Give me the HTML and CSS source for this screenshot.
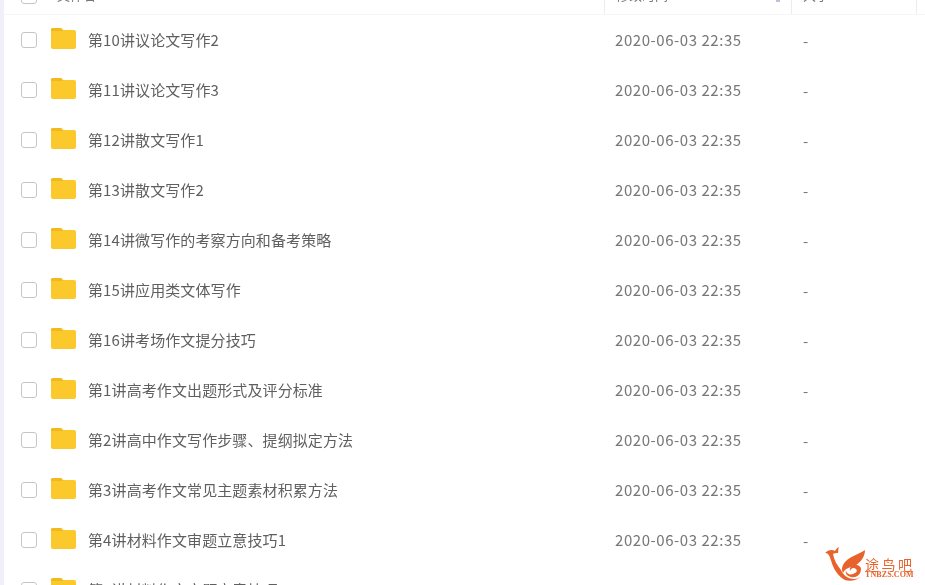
FILE: index.html
```html
<!DOCTYPE html>
<html lang="zh-CN">
<head>
<meta charset="utf-8">
<title>文件列表</title>
<link rel="stylesheet" href="styles.css">
</head>
<body>
<div class="page">
  <div class="table">
    <div class="head">
      <div class="cell-check"><span class="box"></span></div>
      <div class="head-name">文件名</div>
      <div class="head-time">修改时间<span class="sort"></span></div>
      <div class="head-size">大小</div>
      <div class="head-end"></div>
    </div>
    <div class="row"><span class="box"></span><svg class="folder" viewBox="0 0 25 21"><use href="#f"/></svg><span class="name">第10讲议论文写作2</span><span class="time">2020-06-03 22:35</span><span class="size">-</span></div>
    <div class="row"><span class="box"></span><svg class="folder" viewBox="0 0 25 21"><use href="#f"/></svg><span class="name">第11讲议论文写作3</span><span class="time">2020-06-03 22:35</span><span class="size">-</span></div>
    <div class="row"><span class="box"></span><svg class="folder" viewBox="0 0 25 21"><use href="#f"/></svg><span class="name">第12讲散文写作1</span><span class="time">2020-06-03 22:35</span><span class="size">-</span></div>
    <div class="row"><span class="box"></span><svg class="folder" viewBox="0 0 25 21"><use href="#f"/></svg><span class="name">第13讲散文写作2</span><span class="time">2020-06-03 22:35</span><span class="size">-</span></div>
    <div class="row"><span class="box"></span><svg class="folder" viewBox="0 0 25 21"><use href="#f"/></svg><span class="name">第14讲微写作的考察方向和备考策略</span><span class="time">2020-06-03 22:35</span><span class="size">-</span></div>
    <div class="row"><span class="box"></span><svg class="folder" viewBox="0 0 25 21"><use href="#f"/></svg><span class="name">第15讲应用类文体写作</span><span class="time">2020-06-03 22:35</span><span class="size">-</span></div>
    <div class="row"><span class="box"></span><svg class="folder" viewBox="0 0 25 21"><use href="#f"/></svg><span class="name">第16讲考场作文提分技巧</span><span class="time">2020-06-03 22:35</span><span class="size">-</span></div>
    <div class="row"><span class="box"></span><svg class="folder" viewBox="0 0 25 21"><use href="#f"/></svg><span class="name">第1讲高考作文出题形式及评分标准</span><span class="time">2020-06-03 22:35</span><span class="size">-</span></div>
    <div class="row"><span class="box"></span><svg class="folder" viewBox="0 0 25 21"><use href="#f"/></svg><span class="name">第2讲高中作文写作步骤、提纲拟定方法</span><span class="time">2020-06-03 22:35</span><span class="size">-</span></div>
    <div class="row"><span class="box"></span><svg class="folder" viewBox="0 0 25 21"><use href="#f"/></svg><span class="name">第3讲高考作文常见主题素材积累方法</span><span class="time">2020-06-03 22:35</span><span class="size">-</span></div>
    <div class="row"><span class="box"></span><svg class="folder" viewBox="0 0 25 21"><use href="#f"/></svg><span class="name">第4讲材料作文审题立意技巧1</span><span class="time">2020-06-03 22:35</span><span class="size">-</span></div>
    <div class="row"><span class="box"></span><svg class="folder" viewBox="0 0 25 21"><use href="#f"/></svg><span class="name">第5讲材料作文审题立意技巧2</span><span class="time">2020-06-03 22:35</span><span class="size">-</span></div>
  </div>
  <div class="mark">
    <svg class="bird" viewBox="0 0 44 36">
      <path fill="#e8622c" d="M2 7 C5 4 9 3 12 5 C13 3 14 2 16 1 C15 3 15.5 5 15 7 C13 7 11 7 10 8 C11 14 14 19 18 24 C20 29 25 33 31 33 C34 33 37 32 39 30 C35 34 27 36 22 34 C16 31 12 25 10 20 C8 15 7 10 5 8 C4 7 3 7 2 7 Z"/>
      <path fill="#e8622c" d="M42 4 C42 12 36 19 28 21 C24 22 21 24 20 27 C18 23 19 19 23 15 C28 10 36 8 42 4 Z"/>
      <path fill="#e8622c" d="M38 23 C38 29 33 32 28 31 C24 30 22 27 23 25 C24 28 27 29 30 28 C33 27 35 25 33 23 C31 21 28 22 27 25 C26 21 30 18 34 19 C36 19.5 38 21 38 23 Z"/>
    </svg>
    <div class="mark-text">
      <div class="mark-cn">途鸟吧</div>
      <div class="mark-en">TNBZS.COM</div>
    </div>
  </div>
</div>
<svg class="defs" width="0" height="0">
  <defs>
    <g id="f">
      <path fill="#fbc92b" d="M2 2 H23 C24.2 2 25 2.8 25 4 V19 C25 20.2 24.2 21 23 21 H2 C.8 21 0 20.2 0 19 V2 C0 .8 .8 0 2 0 H9 C10 0 10.5 .4 11 1 L12 2 Z"/>
      <path fill="#f2b91c" d="M0 3 V2 C0 .8 .8 0 2 0 H9 C10 0 10.5 .4 11 1 L12.5 3 Z"/>
    </g>
  </defs>
</svg>
</body>
</html>
```
FILE: styles.css
```css
html, body {
  margin: 0;
  height: 100%;
  overflow: hidden;
  background: #fff;
}
.page {
  position: relative;
  height: 585px;
  overflow: hidden;
  border-left: 4px solid #f0f0f8;
  font-family: "Noto Sans CJK SC", "Noto Sans", sans-serif;
  color: #666;
  filter: blur(0.45px);
}
.defs { position: absolute; }
.head {
  display: flex;
  align-items: flex-end;
  height: 15px;
  box-sizing: border-box;
  overflow: hidden;
  border-bottom: 1px solid #f6f6f8;
  font-size: 13px;
  line-height: 18px;
  color: #777;
}
.cell-check { width: 47px; padding-left: 17px; flex: none; box-sizing: border-box; margin-bottom: 10px; }
.head-name { width: 553px; padding-bottom: 10px; flex: none; box-sizing: border-box; padding-left: 6px; }
.head-time, .head-size, .head-end {
  height: 14px;
  box-sizing: border-box;
  border-left: 1px solid #ececf0;
  flex: none;
  display: flex;
  align-items: flex-end;
  padding-bottom: 10px;
}
.head-time { width: 187px; padding-left: 11px; }
.head-size { width: 125px; padding-left: 11px; }
.head-end { width: 9px; }
.sort {
  width: 4px;
  height: 2px;
  margin-left: auto;
  margin-right: 11px;
  margin-bottom: 2px;
  background: #b9c4da;
}
.row {
  display: flex;
  align-items: center;
  height: 50px;
  padding-left: 17px;
  font-size: 15px;
}
.box {
  display: block;
  width: 16px;
  height: 16px;
  box-sizing: border-box;
  flex: none;
  border: 1.5px solid #c6c6c6;
  border-radius: 3px;
  background: #fff;
}
.folder {
  width: 25px;
  height: 21px;
  flex: none;
  margin-left: 14px;
  margin-top: -3px;
}
.name {
  width: 527px;
  flex: none;
  margin-left: 12px;
  margin-bottom: 2px;
  letter-spacing: .1px;
  color: #5f5f5f;
  white-space: nowrap;
}
.time {
  width: 188px;
  flex: none;
  margin-bottom: 2px;
  letter-spacing: .55px;
  color: #777;
  white-space: nowrap;
}
.size { color: #777; }
.mark {
  position: absolute;
  left: 819px;
  top: 546px;
  display: flex;
  align-items: flex-end;
  color: #e8622c;
}
.bird { width: 44px; height: 36px; flex: none; }
.mark-text { width: 49px; margin-left: -2px; margin-bottom: 3px; }
.mark-cn { font-size: 14px; line-height: 14px; letter-spacing: 2.5px; white-space: nowrap; }
.mark-en { font-family: "Liberation Serif", serif; font-size: 8px; line-height: 8px; letter-spacing: .1px; font-weight: 700; white-space: nowrap; }
```
